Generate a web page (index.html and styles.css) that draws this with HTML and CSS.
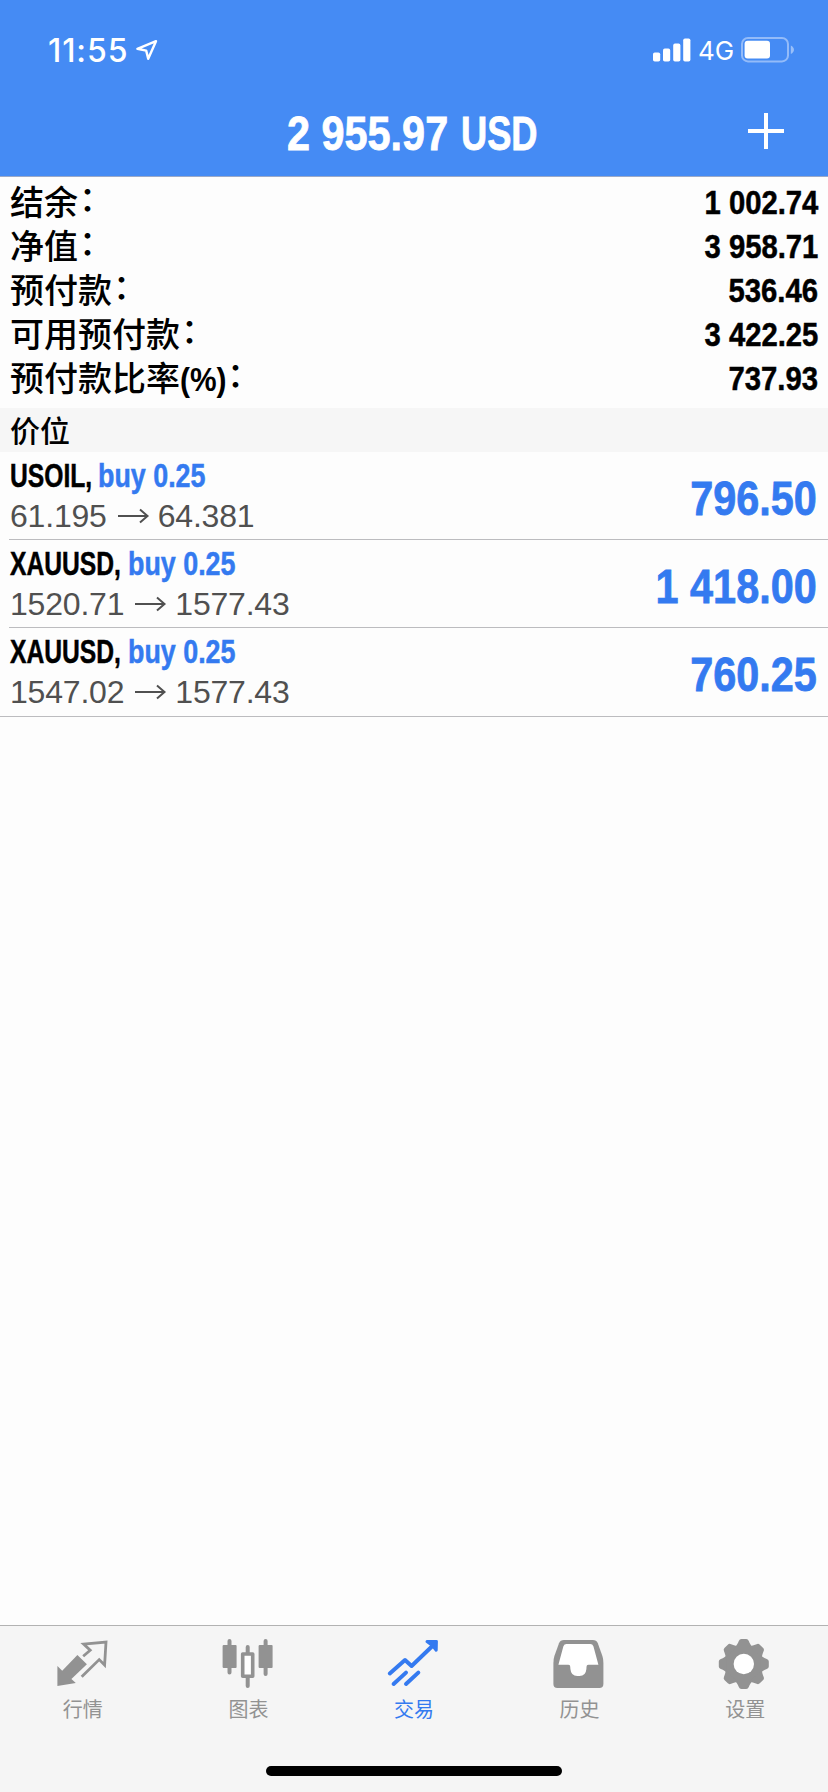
FILE: index.html
```html
<!DOCTYPE html>
<html lang="zh-CN">
<head>
<meta charset="utf-8">
<title>交易</title>
<link rel="stylesheet" href="styles.css">
</head>
<body>
<div class="app">
  <header class="header">
    <div class="status">
      <span class="time">11:55</span>
      <svg class="location" width="24" height="24" viewBox="0 0 24 24"><path d="M21 3.2 2.4 10.8 11.2 12.6 13.2 20.8Z" fill="none" stroke="#fff" stroke-width="2.4" stroke-linejoin="round"/></svg>
      <span class="spacer"></span>
      <svg class="signal" width="38" height="24" viewBox="0 0 38 24" fill="#fff"><rect x="0" y="14.4" width="7.2" height="9.2" rx="1.8"/><rect x="10" y="10.6" width="7.2" height="13" rx="1.8"/><rect x="20.2" y="5.6" width="7.2" height="18" rx="1.8"/><rect x="30.2" y="0.4" width="7.2" height="23.2" rx="1.8"/></svg>
      <span class="network">4G</span>
      <svg class="battery" width="54" height="26" viewBox="0 0 54 26"><rect x="1" y="1" width="46" height="23.4" rx="6" fill="none" stroke="#fff" stroke-opacity=".42" stroke-width="2"/><rect x="3.6" y="3.8" width="25.4" height="17.8" rx="3" fill="#fff"/><path d="M49.8 8.5C54 10.5 54 15 49.8 17Z" fill="#fff" fill-opacity=".45"/></svg>
    </div>
    <div class="title-bar">
      <h1 class="title"><span class="title-num">2 955.97</span><span class="title-cur">USD</span></h1>
      <svg class="add" width="36" height="36" viewBox="0 0 36 36"><path d="M18 0V36M0 18H36" stroke="#fff" stroke-width="4"/></svg>
    </div>
  </header>

  <section class="summary">
    <div class="sum-row"><span class="label">结余<span class="colon">：</span></span><span class="value">1 002.74</span></div>
    <div class="sum-row"><span class="label">净值<span class="colon">：</span></span><span class="value">3 958.71</span></div>
    <div class="sum-row"><span class="label">预付款<span class="colon">：</span></span><span class="value">536.46</span></div>
    <div class="sum-row"><span class="label">可用预付款<span class="colon">：</span></span><span class="value">3 422.25</span></div>
    <div class="sum-row"><span class="label">预付款比率<span class="percent">(%)</span><span class="colon">：</span></span><span class="value">737.93</span></div>
  </section>

  <h2 class="band">价位</h2>

  <ul class="positions">
    <li class="position">
      <div class="info">
        <div class="deal"><span class="symbol usoil">USOIL,</span><span class="side">buy 0.25</span></div>
        <div class="prices"><span>61.195</span><svg class="arrow" width="31" height="16" viewBox="0 0 31 16"><path d="M0 8H29M22 1.5 29.5 8 22 14.5"/></svg><span>64.381</span></div>
      </div>
      <div class="profit">796.50</div>
    </li>
    <li class="position">
      <div class="info">
        <div class="deal"><span class="symbol xauusd">XAUUSD,</span><span class="side">buy 0.25</span></div>
        <div class="prices"><span>1520.71</span><svg class="arrow" width="31" height="16" viewBox="0 0 31 16"><path d="M0 8H29M22 1.5 29.5 8 22 14.5"/></svg><span>1577.43</span></div>
      </div>
      <div class="profit">1 418.00</div>
    </li>
    <li class="position">
      <div class="info">
        <div class="deal"><span class="symbol xauusd">XAUUSD,</span><span class="side">buy 0.25</span></div>
        <div class="prices"><span>1547.02</span><svg class="arrow" width="31" height="16" viewBox="0 0 31 16"><path d="M0 8H29M22 1.5 29.5 8 22 14.5"/></svg><span>1577.43</span></div>
      </div>
      <div class="profit">760.25</div>
    </li>
  </ul>

  <footer class="footer">
    <nav class="tabs">
      <a class="tab">
        <svg class="icon" viewBox="0 0 50 50"><path d="M-.6 28 4.2 32.7 19.4 17 28.9 26.3 13.4 41 17.8 45 -.6 48Z" fill="currentColor"/><path d="M25.2 18.3 32.2 12.3 25.6 6 48 4 46.6 27 41.2 21.6 23.7 38.8" fill="none" stroke="currentColor" stroke-width="2.8"/></svg>
        <span>行情</span>
      </a>
      <a class="tab">
        <svg class="icon" viewBox="0 0 50 50"><path d="M6.5 3V34.5M42.6 3V36M24.7 9V48" stroke="currentColor" stroke-width="4" stroke-linecap="round"/><rect x="-.4" y="7" width="14" height="23" rx="1" fill="currentColor"/><rect x="35.6" y="7" width="14" height="23" rx="1" fill="currentColor"/><rect x="19.7" y="16" width="10" height="22.2" fill="#fff" stroke="currentColor" stroke-width="3.6" stroke-linejoin="round"/></svg>
        <span>图表</span>
      </a>
      <a class="tab active">
        <svg class="icon" viewBox="0 0 50 50"><g fill="none" stroke="currentColor" stroke-width="4" stroke-linecap="round" stroke-linejoin="round"><path d="M.8 35.4 16 22 22.6 28 46 5.5"/><path d="M4.6 46 17 34.6M17 46 29.3 34.6"/></g><path d="M38 3.6 47.4 3.4 47.2 12.2 43.4 7.4Z" fill="currentColor" stroke="currentColor" stroke-width="3" stroke-linejoin="round"/></svg>
        <span>交易</span>
      </a>
      <a class="tab">
        <svg class="icon" viewBox="0 0 50 50"><path d="M9 2H37.8Q41.5 2 42.8 5.2L47.4 18Q48.4 21 48.4 25V46Q48.4 50 44.4 50H2.4Q-1.6 50 -1.6 46V25Q-1.6 21 -.6 18L4 5.2Q5.3 2 9 2Z" fill="currentColor"/><path d="M11.5 6H35.3Q37.6 6 38.4 8.2L43.4 26.7H33.5C31.5 26.7 31.6 28 31.4 31Q30.8 38 24.5 38H22.3Q16 38 15.4 31C15.2 28 15.3 26.7 13.3 26.7H3.4L8.4 8.2Q9.2 6 11.5 6Z" fill="#fff"/></svg>
        <span>历史</span>
      </a>
      <a class="tab">
        <svg class="icon" viewBox="0 0 50 50">
          <defs><path id="tooth" d="M-8.5 -17C-6.5 -19.5 -5.8 -21 -5 -23Q-4.2 -25 -2.4 -25H2.4Q4.2 -25 5 -23C5.8 -21 6.5 -19.5 8.5 -17Z"/></defs>
          <g transform="translate(23.8 26)" fill="currentColor">
            <circle r="19.4"/>
            <use href="#tooth"/><use href="#tooth" transform="rotate(45)"/><use href="#tooth" transform="rotate(90)"/><use href="#tooth" transform="rotate(135)"/><use href="#tooth" transform="rotate(180)"/><use href="#tooth" transform="rotate(225)"/><use href="#tooth" transform="rotate(270)"/><use href="#tooth" transform="rotate(315)"/>
            <circle r="10.2" fill="#fff"/>
          </g>
        </svg>
        <span>设置</span>
      </a>
    </nav>
    <div class="home-indicator"></div>
  </footer>
</div>
</body>
</html>
```
FILE: styles.css
```css
* { box-sizing: border-box; }

body {
  margin: 0;
  background: #fdfdfd;
  color: #000;
  font-family: "Liberation Sans", "Noto Sans CJK SC", sans-serif;
}

svg { display: block; flex: none; overflow: visible; }

.app {
  display: flex;
  flex-direction: column;
  width: 828px;
  height: 1792px;
  overflow: hidden;
}

/* Header */
.header {
  height: 177px;
  background: #458bf4;
  border-bottom: 1px solid #9aa9c8;
  color: #fff;
}

.status {
  display: flex;
  align-items: center;
  height: 100px;
  padding: 0 33px 0 48px;
  font-family: Inter, sans-serif;
}

.time {
  width: 87px;
  font-size: 32px;
  font-weight: 500;
  letter-spacing: .9px;
  white-space: nowrap;
}

.spacer { flex: 1; }
.network { width: 50px; padding-left: 7px; font-size: 26px; font-weight: 400; }

.title-bar {
  display: flex;
  align-items: center;
  height: 62px;
  padding: 0 44px 0 287px;
}

.title {
  display: flex;
  flex: 1;
  margin: 4px 0 0;
  font-size: 49px;
  font-weight: 700;
  line-height: 60px;
  white-space: nowrap;
}

.title-num { width: 174px; transform: scaleX(.845); transform-origin: left; }
.title-cur { transform: scaleX(.74); transform-origin: left; }
.title, .profit { -webkit-text-stroke: .8px currentColor; }

/* Account summary */
.summary { height: 231px; padding: 3px 10px 0; }

.sum-row {
  display: flex;
  justify-content: space-between;
  height: 44px;
  line-height: 44px;
  font-size: 34px;
}

.label {
  font-family: "Noto Sans CJK SC", sans-serif;
  font-weight: 500;
  line-height: 42px;
  white-space: nowrap;
}

.colon { margin-left: 1px; line-height: 1; vertical-align: 4px; }

.percent {
  display: inline-block;
  width: 46px;
  font-family: "Liberation Sans", sans-serif;
  font-weight: 700;
  transform: scaleX(.88);
  transform-origin: left;
}

.value {
  font-weight: 700;
  transform: scaleX(.86);
  transform-origin: right;
  white-space: nowrap;
}

.value, .deal { -webkit-text-stroke: .5px currentColor; }

.band {
  height: 44px;
  margin: 0;
  padding-left: 10px;
  background: #f6f6f6;
  font: 500 30px/42px "Noto Sans CJK SC", sans-serif;
}

/* Open positions */
.positions { flex: 1; margin: 0; padding: 0; list-style: none; }

.position {
  display: flex;
  justify-content: space-between;
  height: 88px;
  margin-left: 9px;
  padding: 0 11px 0 1px;
  border-bottom: 1px solid #bcbcbf;
}

.position:last-child { height: 89px; margin-left: 0; padding-left: 10px; }

.deal {
  display: flex;
  height: 46px;
  font-size: 34px;
  font-weight: 700;
  line-height: 46px;
  white-space: nowrap;
}

.symbol, .side { transform-origin: left; }
.symbol { transform: scaleX(.725); }
.usoil { width: 88px; }
.xauusd { width: 118px; }
.side { color: #347af0; transform: scaleX(.79); }

.prices {
  display: flex;
  align-items: center;
  height: 36px;
  color: #505050;
  font-size: 32px;
  letter-spacing: -.2px;
  line-height: 36px;
}

.arrow { margin: 0 9px 0 11px; }
.arrow path { fill: none; stroke: #505050; stroke-width: 2; }

.profit {
  color: #347af0;
  font-size: 49px;
  font-weight: 700;
  line-height: 92px;
  transform: scaleX(.845);
  transform-origin: right;
  white-space: nowrap;
}

/* Tab bar */
.footer {
  height: 167px;
  background: #f5f5f5;
  border-top: 1px solid #b2b2b2;
}

.tabs { display: flex; height: 140px; }

.tab {
  display: flex;
  flex: 1;
  flex-direction: column;
  align-items: center;
  padding-top: 12px;
  color: #929292;
  font: 400 20px/30px "Noto Sans CJK SC", sans-serif;
}

.icon { width: 50px; height: 50px; margin-bottom: 6px; }
.active { color: #347af0; }

.home-indicator {
  width: 296px;
  height: 10px;
  margin: 0 auto;
  border-radius: 5px;
  background: #000;
}
```
